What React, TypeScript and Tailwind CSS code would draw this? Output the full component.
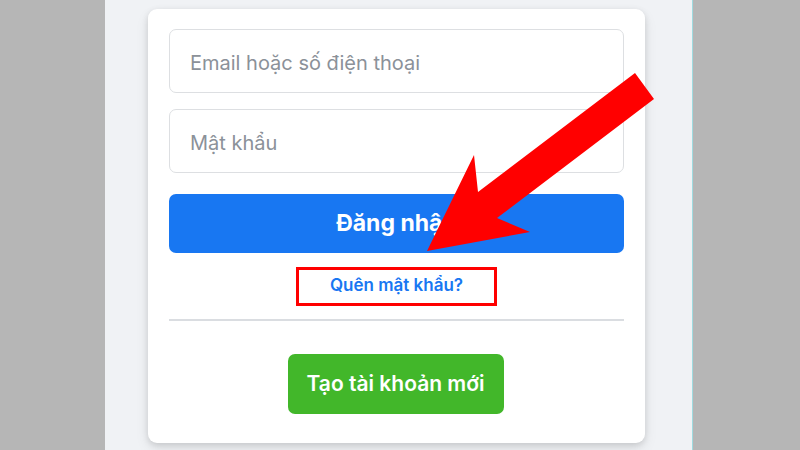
export default function App() {
  return (
    <div className="relative h-[450px] w-[800px] overflow-hidden bg-[#b6b6b6] font-['Inter',sans-serif]">
      <div className="mx-auto h-[450px] w-[588px] translate-x-[-1px] border-r border-[#9fdbe0] bg-[#f0f2f5] pt-[9px]">
        <div className="mx-auto flex h-[434px] w-[497px] translate-x-[-2px] flex-col rounded-[9px] bg-white px-[21px] pt-[20px] shadow-[0_2px_6px_rgba(0,0,0,0.12),0_6px_14px_rgba(0,0,0,0.08)]">
          <div className="flex h-[64px] items-center rounded-[7px] border border-[#dddfe2] px-[20px] pt-[3px] text-[20px] text-[#8b9199]">
            Email hoặc số điện thoại
          </div>
          <div className="mt-[16px] flex h-[64px] items-center rounded-[7px] border border-[#dddfe2] px-[20px] pt-[3px] text-[20px] text-[#8b9199]">
            Mật khẩu
          </div>
          <div className="mt-[21px] flex h-[59px] items-center justify-center rounded-[7px] bg-[#1877f2] text-[23px] font-bold text-white">
            Đăng nhập
          </div>
          <div className="flex h-[66px] items-center justify-center text-[17px] font-semibold text-[#1877f2]">
            Quên mật khẩu?
          </div>
          <div className="h-[2px] bg-[#dadde1]" />
          <div className="mt-[33px] flex justify-center">
            <div className="flex h-[60px] w-[216px] translate-x-[-1px] items-center justify-center rounded-[7px] bg-[#42b72a] text-[21px] font-semibold text-white">
              Tạo tài khoản mới
            </div>
          </div>
        </div>
      </div>

      {/* annotation: red box + arrow */}
      <div className="absolute left-[296px] top-[267px] h-[39px] w-[201px] border-[3px] border-[#ff0000]" />
      <svg className="absolute left-0 top-0" width="800" height="450" viewBox="0 0 800 450">
        <polygon
          points="427,251 474,155 478,192 635,73 654,99 497,218 530,232"
          fill="#ff0000"
        />
      </svg>
    </div>
  );
}
